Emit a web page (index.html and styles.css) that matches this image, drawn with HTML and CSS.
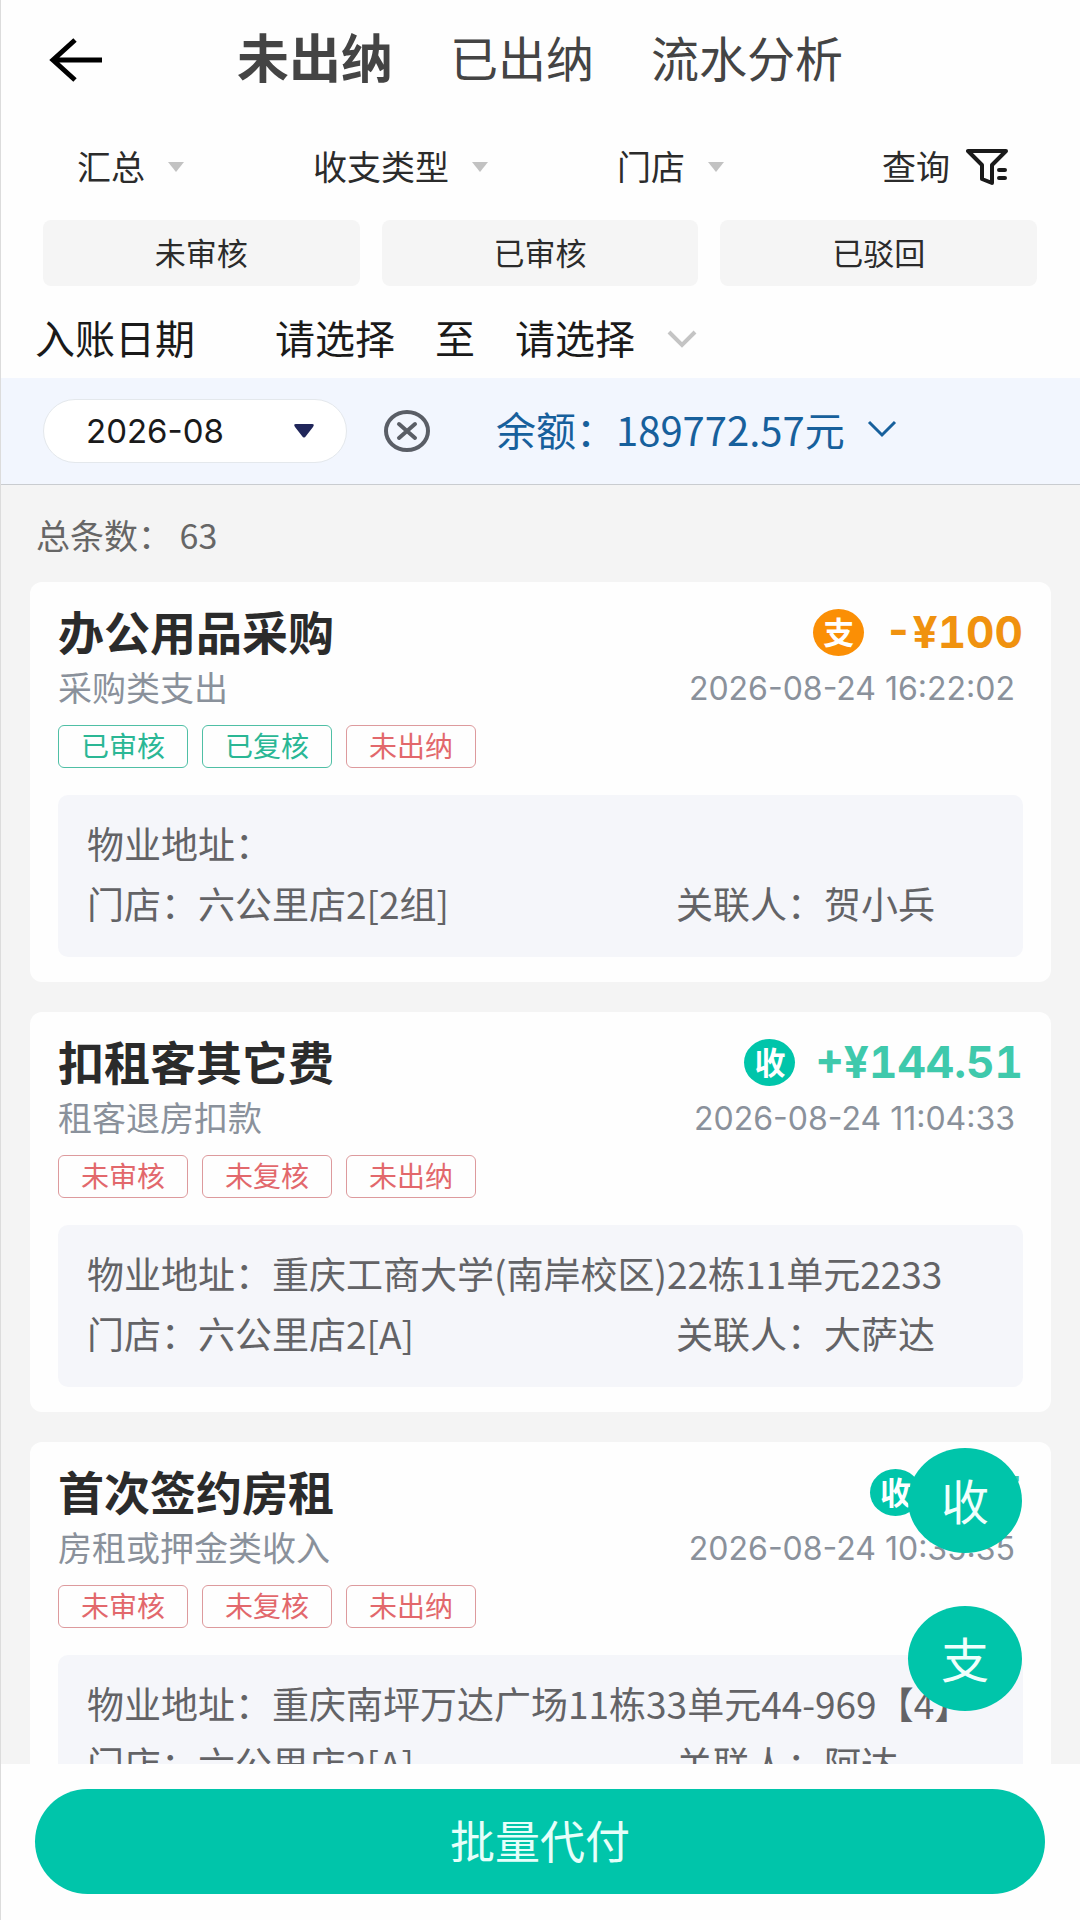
FILE: index.html
```html
<!DOCTYPE html>
<html lang="zh-CN">

<head>
    <meta charset="UTF-8">
    <meta name="viewport" content="width=device-width, initial-scale=1.0">
    <title>未出纳</title>
    <link rel="stylesheet" href="styles.css">
</head>

<body>

    <!-- Header -->
    <header class="header">
        <button class="back" type="button" aria-label="返回">
            <svg width="54" height="44" viewBox="0 0 54 44" fill="none" stroke="#000" stroke-width="5">
                <path d="M53 22H4M26 2L4 22l22 20" />
            </svg>
        </button>
        <nav class="tabs">
            <a class="tab active" href="#">未出纳</a>
            <a class="tab" href="#">已出纳</a>
            <a class="tab" href="#">流水分析</a>
        </nav>
    </header>

    <!-- Filters -->
    <div class="filters">
        <label class="picker">
            <select aria-label="汇总"><option>汇总</option></select>
            <span class="caret"></span>
        </label>
        <label class="picker">
            <select aria-label="收支类型"><option>收支类型</option></select>
            <span class="caret"></span>
        </label>
        <label class="picker">
            <select aria-label="门店"><option>门店</option></select>
            <span class="caret"></span>
        </label>
        <button class="search" type="button">
            <span>查询</span>
            <svg width="42" height="37" viewBox="0 0 42 37" fill="none" stroke="#1a1a1a" stroke-width="4" stroke-linecap="round" stroke-linejoin="round">
                <path d="M2 2h38L26 16v18l-10-4V16z" />
                <path d="M33 21h6M33 29h6" />
            </svg>
        </button>
    </div>

    <!-- Audit status -->
    <div class="status">
        <button type="button">未审核</button>
        <button type="button">已审核</button>
        <button type="button">已驳回</button>
    </div>

    <!-- Entry date -->
    <div class="dates">
        <span class="dates-label">入账日期</span>
        <button type="button">请选择</button>
        <span>至</span>
        <button type="button">请选择</button>
        <svg width="30" height="18" viewBox="0 0 30 18" fill="none" stroke="#c4c4c4" stroke-width="4">
            <path d="M2 2l13 13L28 2" />
        </svg>
    </div>

    <!-- Month and balance -->
    <div class="balance-bar">
        <label class="month">
            <select aria-label="月份"><option>2026-08</option></select>
            <svg width="20" height="14" viewBox="0 0 20 14" fill="#20265a">
                <path d="M2 0h16q3 0 1 3l-7 9q-2 3-4 0L1 3q-2-3 1-3z" />
            </svg>
        </label>
        <button class="clear" type="button" aria-label="清除">
            <svg width="46" height="42" viewBox="0 0 46 42" fill="none" stroke="#5a5e66" stroke-width="4" stroke-linecap="round">
                <ellipse cx="23" cy="21" rx="21" ry="19" />
                <path d="M15 14l16 14M31 14L15 28" />
            </svg>
        </button>
        <button class="balance" type="button">
            余额：189772.57元
            <svg width="30" height="18" viewBox="0 0 30 18" fill="none" stroke="#17609c" stroke-width="3">
                <path d="M2 2l13 13L28 2" />
            </svg>
        </button>
    </div>

    <!-- Record list -->
    <main class="list">
        <p class="total">总条数： 63</p>

        <article class="card">
            <div class="card-head">
                <h2>办公用品采购</h2>
                <span class="badge out">支</span>
                <strong class="amount minus">-¥100</strong>
            </div>
            <div class="card-sub">
                <span>采购类支出</span>
                <time>2026-08-24 16:22:02</time>
            </div>
            <div class="tags">
                <span class="tag done">已审核</span>
                <span class="tag done">已复核</span>
                <span class="tag">未出纳</span>
            </div>
            <div class="details">
                <p class="address">物业地址：</p>
                <p>门店：六公里店2[2组]</p>
                <p>关联人：贺小兵</p>
            </div>
        </article>

        <article class="card">
            <div class="card-head">
                <h2>扣租客其它费</h2>
                <span class="badge">收</span>
                <strong class="amount">+¥144.51</strong>
            </div>
            <div class="card-sub">
                <span>租客退房扣款</span>
                <time>2026-08-24 11:04:33</time>
            </div>
            <div class="tags">
                <span class="tag">未审核</span>
                <span class="tag">未复核</span>
                <span class="tag">未出纳</span>
            </div>
            <div class="details">
                <p class="address">物业地址：重庆工商大学(南岸校区)22栋11单元2233</p>
                <p>门店：六公里店2[A]</p>
                <p>关联人：大萨达</p>
            </div>
        </article>

        <article class="card">
            <div class="card-head">
                <h2>首次签约房租</h2>
                <span class="badge">收</span>
                <strong class="amount">+¥5</strong>
            </div>
            <div class="card-sub">
                <span>房租或押金类收入</span>
                <time>2026-08-24 10:35:35</time>
            </div>
            <div class="tags">
                <span class="tag">未审核</span>
                <span class="tag">未复核</span>
                <span class="tag">未出纳</span>
            </div>
            <div class="details">
                <p class="address">物业地址：重庆南坪万达广场11栋33单元44-969【4】</p>
                <p>门店：六公里店2[A]</p>
                <p>关联人：阿达</p>
            </div>
        </article>

        <!-- Floating buttons -->
        <div class="fabs">
            <button type="button">收</button>
            <button type="button">支</button>
        </div>
    </main>

    <footer class="footer">
        <button class="pay" type="button">批量代付</button>
    </footer>

</body>

</html>
```
FILE: styles.css
```css
/* Basic Reset */
* {
    margin: 0;
    padding: 0;
    box-sizing: border-box;
}

body {
    display: flex;
    flex-direction: column;
    height: 100vh;
    overflow: hidden;
    background: #fefefe;
    border-left: 1px solid #dcdcdc;
    color: #2b2b2b;
    font-family: "Noto Sans CJK SC", sans-serif;
    font-size: 34px;
}

button,
select {
    border: none;
    background: none;
    color: inherit;
    font: inherit;
    cursor: pointer;
}

select {
    appearance: none;
    outline: none;
}

svg {
    display: block;
    flex: none;
}

/* Header */
.header {
    display: flex;
    align-items: center;
    height: 116px;
    padding: 4px 0 0 48px;
}

.tabs {
    display: flex;
    align-items: center;
    gap: 57px;
    margin-left: 134px;
    padding-bottom: 8px;
}

.tab {
    color: #444;
    font-size: 48px;
    line-height: 72px;
    text-decoration: none;
}

.tab.active {
    font-size: 52px;
    font-weight: 700;
}

/* Filters */
.filters {
    display: flex;
    align-items: center;
    gap: 129px;
    height: 104px;
    padding: 0 72px 2px 76px;
}

.filters select,
.filters button span {
    padding-bottom: 4px;
}

.picker {
    display: flex;
    align-items: center;
    gap: 23px;
}

/* Small grey triangle */
.caret {
    border: 8px solid transparent;
    border-top: 10px solid #c2c2c2;
    border-bottom: 0;
}

.search {
    display: flex;
    align-items: center;
    gap: 16px;
    margin-left: auto;
}

/* Audit status */
.status {
    display: grid;
    grid-template-columns: repeat(3, 1fr);
    gap: 22px;
    padding: 0 43px 0 42px;
}

.status button {
    height: 66px;
    padding-bottom: 4px;
    border-radius: 8px;
    background: #f5f5f5;
    font-size: 31px;
}

/* Entry date */
.dates {
    display: flex;
    align-items: center;
    gap: 40px;
    height: 92px;
    padding: 10px 34px 0;
    color: #1a1a1a;
    font-size: 40px;
    line-height: 60px;
}

.dates-label {
    margin-right: 40px;
}

.dates svg {
    margin: 4px 0 0 -8px;
}

/* Month and balance */
.balance-bar {
    display: flex;
    align-items: center;
    height: 107px;
    padding-left: 42px;
    border-bottom: 1px solid #c9ccd0;
    background: #f2f6fe;
}

.month {
    display: flex;
    align-items: center;
    justify-content: space-between;
    width: 304px;
    height: 64px;
    padding: 0 32px 0 42px;
    border: 1px solid #e4e8ec;
    border-radius: 32px;
    background: #fff;
    color: #1a1a1a;
    font-family: Inter, sans-serif;
    font-size: 33px;
}

.clear {
    margin-left: 37px;
}

.balance {
    display: flex;
    align-items: center;
    gap: 22px;
    margin-left: 66px;
    padding-bottom: 4px;
    color: #17609c;
    font-size: 40px;
}

/* Record list */
.list {
    position: relative;
    flex: 1;
    min-height: 0;
    overflow: hidden;
    padding: 0 29px;
    background: #f4f4f4;
}

.total {
    height: 97px;
    padding: 3px 6px 0;
    color: #666;
    line-height: 94px;
}

.card {
    margin-bottom: 30px;
    padding: 24px 28px 25px;
    border-radius: 12px;
    background: #fefefe;
}

.card-head {
    display: flex;
    align-items: center;
    height: 52px;
}

.card-head h2 {
    flex: 1;
    padding-bottom: 4px;
    font-size: 46px;
    line-height: 48px;
}

.badge {
    width: 51px;
    height: 47px;
    border-radius: 50%;
    background: #00c5aa;
    color: #fff;
    font-size: 31px;
    font-weight: 700;
    line-height: 43px;
    text-align: center;
}

.badge.out {
    background: #fb8f05;
}

.amount {
    margin-left: 20px;
    color: #3fc9ac;
    font-family: Inter, sans-serif;
    font-size: 44px;
    font-variant-numeric: tabular-nums;
}

.amount.minus {
    color: #f0920f;
}

.card-sub {
    display: flex;
    justify-content: space-between;
    height: 46px;
    margin-top: 8px;
    padding-right: 8px;
    color: #8a919b;
    line-height: 42px;
}

.card-sub time {
    font-family: Inter, sans-serif;
    font-size: 32px;
    line-height: 46px;
}

.tags {
    display: flex;
    gap: 14px;
    margin-top: 13px;
}

.tag {
    width: 130px;
    height: 43px;
    border: 1px solid #dd9a9d;
    border-radius: 6px;
    color: #e2686c;
    font-size: 28px;
    line-height: 39px;
    text-align: center;
}

.tag.done {
    border-color: #4fbfa5;
    color: #2ab795;
}

.details {
    display: grid;
    grid-template-columns: 65% 35%;
    margin-top: 27px;
    padding: 18px 30px 24px 29px;
    border-radius: 10px;
    background: #f5f6fa;
    color: #636366;
    font-size: 37px;
    line-height: 60px;
    white-space: nowrap;
}

.address {
    grid-column: span 2;
}

/* Floating buttons */
.fabs {
    position: absolute;
    right: 58px;
    bottom: 53px;
    display: grid;
    gap: 53px;
}

.fabs button {
    width: 114px;
    height: 105px;
    padding-bottom: 4px;
    border-radius: 50%;
    background: #00c5aa;
    color: #f0fffc;
    font-size: 48px;
}

/* Footer */
.footer {
    padding: 25px 35px 26px 34px;
}

.pay {
    display: block;
    width: 100%;
    height: 105px;
    padding-bottom: 4px;
    border-radius: 53px;
    background: #00c5aa;
    color: #e6fffa;
    font-size: 45px;
}
```
